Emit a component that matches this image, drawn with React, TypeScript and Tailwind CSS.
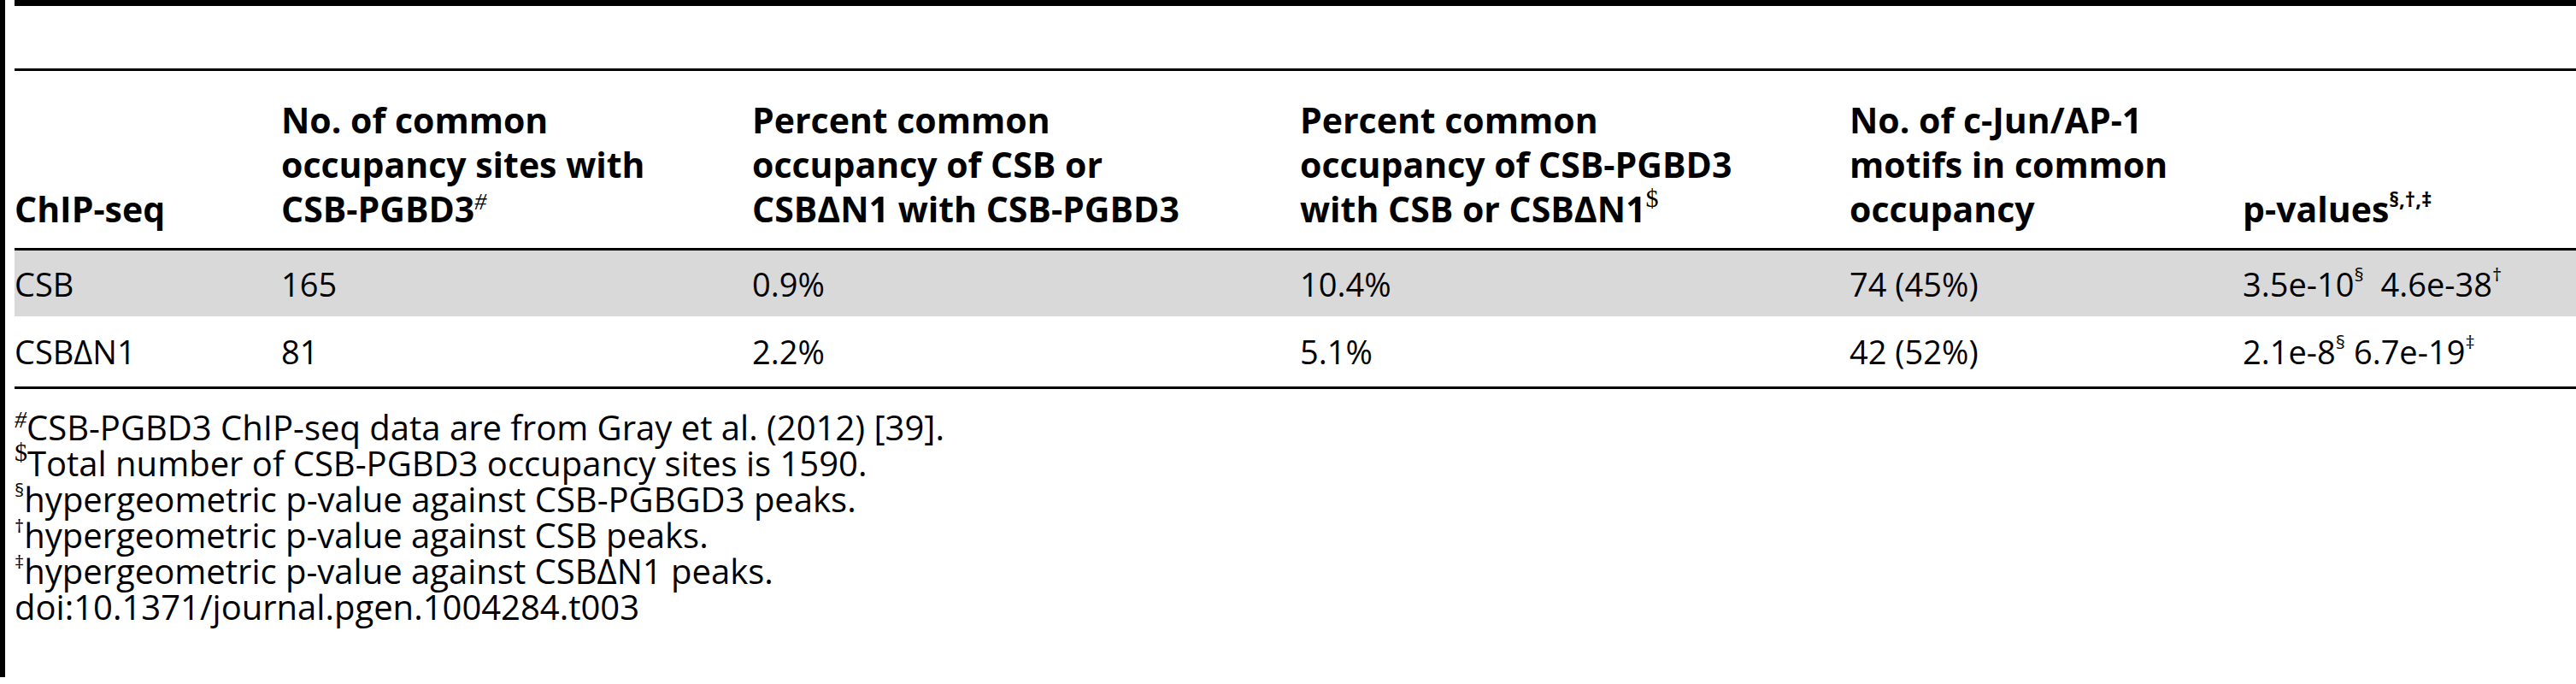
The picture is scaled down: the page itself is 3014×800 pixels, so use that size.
import React from 'react';

const grid = 'grid grid-cols-[312px_551px_641px_643px_460px_1fr]';

function Serif({ children }: { children: React.ReactNode }) {
  return <sup className="font-['Liberation_Serif'] font-normal italic text-[28px] top-[-0.55em]">{children}</sup>;
}

function Mark({ children }: { children: React.ReactNode }) {
  return <sup className="text-[22px] top-[-0.8em]">{children}</sup>;
}

const rows = [
  { name: 'CSB\u0394N1', sites: '81', pct1: '2.2%', pct2: '5.1%', motifs: '42 (52%)' },
];

export default function App() {
  return (
    <div className="h-[800px] w-[3014px] bg-white font-['Open_Sans',sans-serif] text-black">
      <div className="h-[792px] border-l-[6px] border-black pl-[11px]">
        <div className="h-[7px] bg-black" />
        <div className="h-[73px]" />

        <div className={grid + ' h-[213px] items-end pb-[20px] border-t-[3px] border-b-[3px] border-black text-[41px] font-bold leading-[52px]'}>
          <div>ChIP-seq</div>
          <div>No. of common<br />occupancy sites with<br />CSB-PGBD3<Serif>#</Serif></div>
          <div>Percent common<br />occupancy of CSB or<br />CSB&Delta;N1 with CSB-PGBD3</div>
          <div>Percent common<br />occupancy of CSB-PGBD3<br />with CSB or CSB&Delta;N1<sup className="font-['Liberation_Serif'] font-normal text-[30px] top-[-0.6em]">$</sup></div>
          <div>No. of c-Jun/AP-1<br />motifs in common<br />occupancy</div>
          <div>p-values<sup className="text-[24px] top-[-0.75em]">&sect;,&dagger;,&Dagger;</sup></div>
        </div>

        <div className={grid + ' h-[77px] items-center bg-[#d9d9d9] text-[38px] leading-[46px]'}>
          <div>CSB</div>
          <div>165</div>
          <div>0.9%</div>
          <div>10.4%</div>
          <div>74 (45%)</div>
          <div>3.5e-10<Mark>&sect;</Mark>&nbsp; 4.6e-38<Mark>&dagger;</Mark></div>
        </div>

        {rows.map((r) => (
          <div key={r.name} className={grid + ' h-[85px] items-center border-b-[3px] border-black text-[38px] leading-[46px]'}>
            <div>{r.name}</div>
            <div>{r.sites}</div>
            <div>{r.pct1}</div>
            <div>{r.pct2}</div>
            <div>{r.motifs}</div>
            <div>2.1e-8<Mark>&sect;</Mark> 6.7e-19<Mark>&Dagger;</Mark></div>
          </div>
        ))}

        <div className="pt-[24px] text-[40px] leading-[42px]">
          <div><Serif>#</Serif>CSB-PGBD3 ChIP-seq data are from Gray et al. (2012) [39].</div>
          <div><sup className="font-['Liberation_Serif'] text-[30px] top-[-0.6em]">$</sup>Total number of CSB-PGBD3 occupancy sites is 1590.</div>
          <div><Mark>&sect;</Mark>hypergeometric p-value against CSB-PGBGD3 peaks.</div>
          <div><Mark>&dagger;</Mark>hypergeometric p-value against CSB peaks.</div>
          <div><Mark>&Dagger;</Mark>hypergeometric p-value against CSB&Delta;N1 peaks.</div>
          <div>doi:10.1371/journal.pgen.1004284.t003</div>
        </div>
      </div>
    </div>
  );
}
